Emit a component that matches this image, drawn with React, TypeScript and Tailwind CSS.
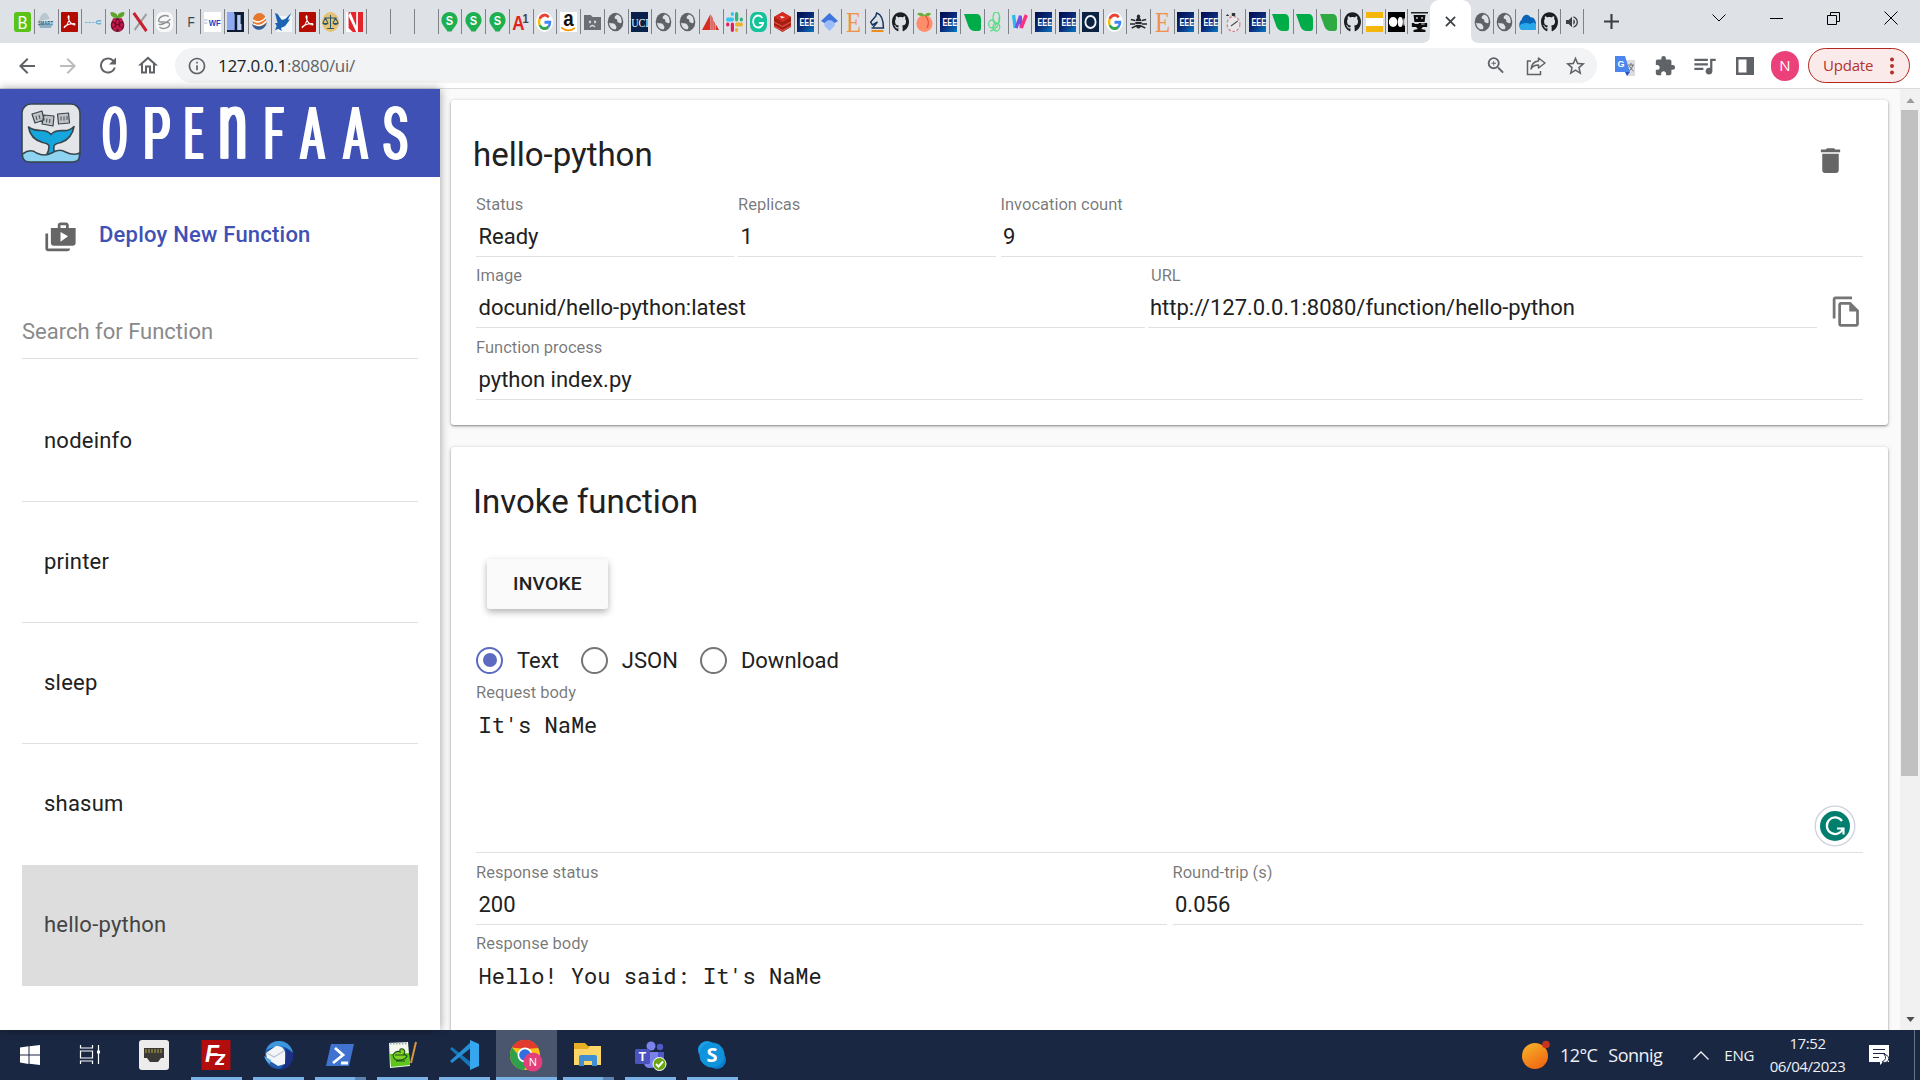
import React from "react";
import { FaGithub } from "react-icons/fa";
import {
  MdPublic, MdShopTwo, MdDelete, MdOutlineFileCopy, MdZoomIn, MdStarBorder, MdExtension,
  MdQueueMusic, MdInfoOutline, MdArrowBack, MdArrowForward, MdRefresh, MdOutlineHome, MdVolumeUp,
} from "react-icons/md";

type Kids = { children?: React.ReactNode };

/* ---------- favicons (20 x 20 grid, squeezed to the narrow tab) ---------- */

function Fav({ children }: Kids) {
  return (
    <svg viewBox="0 0 20 20" preserveAspectRatio="none" className="h-5 w-[17px] overflow-hidden">
      {children}
    </svg>
  );
}

const T = ({ x = 10, y = 15, s = 14, f = "#fff", w = 700, font = "Liberation Sans", children }: any) => (
  <text x={x} y={y} fontSize={s} fill={f} fontWeight={w} textAnchor="middle" fontFamily={font}>
    {children}
  </text>
);

const Acrobat = () => (
  <Fav>
    <rect width="20" height="20" rx="1" fill="#b30b00" />
    <path d="M4 15.500c2.500-1 6-6 5.500-11-.3-1.500-1.800-.5-1 1.500C9.500 9.500 12 12 15.500 13c1.500 0 1.300-1.500-.5-1.500-4 0-7.500 1-10.500 2.800-1 .8-1 1.500-.5 1.200z" fill="none" stroke="#fff" strokeWidth="1.200" strokeLinejoin="round" />
  </Fav>
);
const Pin = () => (
  <Fav>
    <path d="M10 0c6 0 9.500 4 9.500 8.500S14 16 12.500 19.500h-5C6 16 .5 13 .5 8.500S4 0 10 0z" fill="#1eaf50" />
    <T y={13} s={13}>S</T>
  </Fav>
);
const IEEE = () => (
  <Fav>
    <defs>
      <linearGradient id="ieee" x1="0" y1="0" x2="1" y2="1">
        <stop offset="0" stopColor="#020b4c" />
        <stop offset=".5" stopColor="#0a2a78" />
        <stop offset="1" stopColor="#0879c4" />
      </linearGradient>
    </defs>
    <rect width="20" height="20" fill="url(#ieee)" />
    <text x="3" y="14" fontSize="11" fontWeight="700" fill="#fff" fontFamily="Liberation Sans" textLength="17" lengthAdjust="spacingAndGlyphs">EEE</text>
  </Fav>
);
const Google = () => (
  <Fav>
    <circle cx="10" cy="10" r="10" fill="#fff" />
    <g fill="none" strokeWidth="3">
      <path d="M15 5.200A6.500 6.500 0 0 0 4.300 6.900" stroke="#ea4335" />
      <path d="M4.300 6.900a6.500 6.500 0 0 0 0 6.200" stroke="#fbbc05" />
      <path d="M4.300 13.100a6.500 6.500 0 0 0 10.200 1.700" stroke="#34a853" />
      <path d="M14.500 14.800A6.500 6.500 0 0 0 16.500 10.200H10" stroke="#4285f4" />
    </g>
  </Fav>
);
const Globe = () => (
  <Fav>
    <circle cx="10" cy="10" r="9.200" fill="#5f6368" />
    <path d="M2.500 10.500c2 1.500 6 0 7 2s2 1.500 1.500 3.500l-1 1.500C5 17.500 2.500 14 2.500 10.500zM11.500 2.600c-.5 1.500-2.500 1-2.500 3s2.500 1 3 2.500-.5 2 1.500 2.500 2.500 1 3.800-.1C17.500 6 15.500 3.300 11.500 2.600z" fill="#dee1e6" />
  </Fav>
);
const Hub = () => <FaGithub preserveAspectRatio="none" className="h-5 w-[17px] text-[#1b1f23]" />;
const Etsy = () => <Fav><T y={19.500} s={29} f="#f0924a" w={400} font="Liberation Serif">E</T></Fav>;
const Leaf = ({ c = "#00ac47" }: { c?: string }) => (
  <Fav><path d="M0 2h15c3 0 5 2 5 5v9q0 3-3 3h-4Q7 19 5 14z" fill={c} /></Fav>
);

const favicons: React.ReactNode[] = [
  <Fav><rect width="20" height="20" rx="3" fill="#5bc318" /><T y={16.500} s={18} w={400} font="Lato">B</T></Fav>,
  <Fav><path d="M2 9c3-8 7-9 10-7l3 5z" fill="#b9c6cf" /><path d="M1 12h18l-3 4H4z" fill="#8fb0c4" /><T y={13} s={5} f="#255a7c">SMART</T></Fav>,
  <Acrobat />,
  <Fav><path d="M0 10.500h12" stroke="#7db4d6" strokeWidth="1.200" strokeDasharray="3 1" /><path d="M19 9q-5-1-6 1.500 1 2 6 1" fill="none" stroke="#6aaed6" strokeWidth="1.400" /></Fav>,
  <Fav>
    <path d="M10 6C5 6 1 4 2 0c4 0 7 1 8 4 1-3 4-4 8-4 1 4-3 6-8 6z" fill="#5fa52b" />
    <ellipse cx="10" cy="13" rx="8" ry="7" fill="#6d0f2c" />
    {[[6, 8], [14, 8], [10, 10], [5, 13], [15, 13], [10, 15], [7, 17], [13, 17]].map(([x, y]) => <circle key={`${x}${y}`} cx={x} cy={y} r="1.900" fill="#c7184b" />)}
  </Fav>,
  <Fav><path d="M17 2 3 18" stroke="#9a9a9a" strokeWidth="2" /><path d="M2 1l15 18" stroke="#c8202f" strokeWidth="3.500" /></Fav>,
  <Fav><rect width="20" height="20" rx="7" fill="#f8f8f8" /><path d="M15 4.500C10 2 3 5 3 9c0 2 13 0 13 3 0 4-8 6-12 3M3 12c3 2 12-3 14-5" fill="none" stroke="#8f9295" strokeWidth="1.500" /></Fav>,
  <Fav><T x={13} y={15} s={14} f="#37474f" w={400}>F</T></Fav>,
  <Fav><rect width="20" height="20" fill="#fff" /><path d="M0 8h4M0 11h4" stroke="#8b93b8" strokeWidth=".8" /><T x={12.500} y={14} s={9} f="#1f43c4">WF</T></Fav>,
  <Fav><rect width="20" height="20" fill="#b9cdf6" /><path d="M0 0h9v20H0z" fill="#8faaf0" /><path d="M8 0h12v3h-8v17H9V3z" fill="#0e1c33" /><path d="M16 3h4v17h-3v-8h-1z" fill="#0e1c33" /><path d="M0 18h20v2H0z" fill="#0e1c33" /></Fav>,
  <Fav><circle cx="10" cy="9" r="8" fill="#e8772e" /><path d="M2 8q8 5 16-3M3 12q8 4 15-3" fill="none" stroke="#fff" strokeWidth="1.500" /><path d="M1 12c3 8 15 8 18-2-4 5-12 6-18 2z" fill="#2f5e9e" /></Fav>,
  <Fav><path d="M4 4h16v16H2z" fill="#f2f6fb" /><path d="M0 1l3 1 5 6 4-1 7-6-4 7 3-1-6 7-5 2 1 3-4-2-4 1 2-4-2-3 3 0z" fill="#1b63b0" /></Fav>,
  <Acrobat />,
  <Fav><circle cx="10" cy="10" r="10" fill="#e5c274" /><path d="M10 3v13M6 16.500h8M3 6h14M4 6l-3 5M4 6l3 5M16 6l-3 5M16 6l3 5" fill="none" stroke="#27566b" strokeWidth="1.200" /><path d="M0 11h8q-4 4-8 0zM12 11h8q-4 4-8 0z" fill="#27566b" /></Fav>,
  <Fav><rect width="20" height="20" fill="#e3242b" /><path d="M0 0h3v16l5 4H0zM5 0l7 14v6L3 4zM12 0h2v20h-2z" fill="#fff" /></Fav>,
  null, null, null,
  <Pin />, <Pin />, <Pin />,
  <Fav><T x={7.500} y={18} s={20} f="#e2231a">A</T><T x={16} y={11} s={13} f="#444">1</T></Fav>,
  <Google />,
  <Fav><rect width="20" height="20" fill="#fff" /><T y={14} s={22} f="#111">a</T><path d="M1.500 15.500q8 5.500 16 .5" fill="none" stroke="#f79400" strokeWidth="1.700" /></Fav>,
  <Fav><path d="M0 3h8l2 2h10v13H0z" fill="#6b6f73" /><path d="M6 9l2 2M8 9l-2 2M12 9l2 2M14 9l-2 2M7 15q3-3 6 0" fill="none" stroke="#dee1e6" strokeWidth="1.200" /></Fav>,
  <Globe />,
  <Fav><rect width="20" height="20" fill="#06224a" /><T x={10.500} y={15} s={12} w={400} font="Liberation Serif">UCI</T></Fav>,
  <Globe />, <Globe />,
  <Fav><path d="M10 2v16H0zM11 3l1.500 3v12H11zM13.500 8l1.500 3v7h-1.500zM16 12l4 6h-4z" fill="#d92b20" /></Fav>,
  <Fav>
    <g strokeWidth="3.800" strokeLinecap="round" fill="none">
      <path d="M7.500 2v.1M2 7.500h5.500" stroke="#36c5f0" />
      <path d="M12.500 2v5.500M18 7.500h.1" stroke="#2eb67d" />
      <path d="M12.500 18v.1M12.500 12.500H18" stroke="#ecb22e" />
      <path d="M7.500 12.500V18M2 12.500h.1" stroke="#e01e5a" />
    </g>
  </Fav>,
  <Fav><rect width="20" height="20" rx="7" fill="#15c39a" /><path d="M14.500 6A6 6 0 1 0 15.500 11h-5" fill="none" stroke="#fff" strokeWidth="2" /></Fav>,
  <Fav>
    <path d="M0 5l10-5 10 5v10l-10 5-10-5z" fill="#a41e11" />
    <path d="M0 5l10-5 10 5-10 5z" fill="#d82c20" /><path d="M0 10l10 4.500L20 10M0 14l10 4.500L20 14" fill="none" stroke="#de5147" strokeWidth="1.200" /><path d="M7 4l6 1-4 1.500z" fill="#fff" />
  </Fav>,
  <IEEE />,
  <Fav><path d="M10 1l10 8-10 5L0 9z" fill="#3f74dc" /><path d="M4 11q6-6 12 0v3l-6 5-6-5z" fill="#9dbdf8" /></Fav>,
  <Etsy />,
  <Fav><path d="M3 16h14q0-13-8-15l-1 3-6 6 2 3 6-3-5 5" fill="none" stroke="#17365f" strokeWidth="1.700" /><path d="M3 19h14" stroke="#f08c1e" strokeWidth="2" /></Fav>,
  <Hub />,
  <Fav><ellipse cx="10" cy="11.500" rx="9.500" ry="8.500" fill="#ff8d6b" /><path d="M11 4q6 5 2 12" fill="none" stroke="#e0523f" strokeWidth="1.500" /><path d="M1 2q5-3 9 1 4-4 8-1-3 3-8 2-5 1-9-2z" fill="#6fae3d" /></Fav>,
  <IEEE />, <Leaf />,
  <Fav><g fill="none" stroke="#5fdc86" strokeWidth="1.500"><ellipse cx="11" cy="6" rx="4" ry="6" /><ellipse cx="6" cy="12" rx="4" ry="4" /><ellipse cx="11" cy="15" rx="4" ry="4" /><path d="M4 19Q16 16 14 5" /></g></Fav>,
  <Fav><path d="M3 3l2 13" stroke="#2bb8f0" strokeWidth="4" /><path d="M6 16l5-12 1 12" fill="none" stroke="#7a4fe0" strokeWidth="3.500" /><path d="M12 16l6-13" stroke="#ff2f7d" strokeWidth="4" /></Fav>,
  <IEEE />, <IEEE />,
  <Fav><rect width="20" height="20" fill="#0b2340" /><circle cx="10" cy="10" r="6" fill="none" stroke="#f0f4fa" strokeWidth="2.200" /></Fav>,
  <Google />,
  <Fav><ellipse cx="10" cy="11" rx="3.800" ry="5.500" fill="#26282b" /><circle cx="10" cy="4.500" r="2" fill="#26282b" /><path d="M1 7.500l5 1M19 7.500l-5 1M0 12h6M20 12h-6M2 16l5-2M18 16l-5-2" fill="none" stroke="#26282b" strokeWidth="1.400" /><path d="M6 9.500h8M6 12.500h8" stroke="#dee1e6" strokeWidth=".9" /></Fav>,
  <Etsy />, <IEEE />, <IEEE />,
  <Fav><circle cx="10" cy="12" r="7.500" fill="#e8e8ea" stroke="#d08a90" strokeWidth="1.500" strokeDasharray="3 2" /><path d="M7 14l8-5" stroke="#444" strokeWidth="1.200" /><path d="M8 1h4v3H8zM1 4l2-2 2 2z" fill="#333" /></Fav>,
  <IEEE />, <Leaf />, <Leaf />, <Leaf c="#2faa43" />,
  <Hub />,
  <Fav><rect width="20" height="20" fill="#f4b50c" /><rect y="6" width="20" height="8" fill="#fff" /></Fav>,
  <Fav><rect width="20" height="20" fill="#000" /><circle cx="6" cy="10" r="5" fill="#fff" /><ellipse cx="14.500" cy="10" rx="3" ry="5" fill="#fff" /><ellipse cx="19" cy="10" rx=".8" ry="4" fill="#fff" /></Fav>,
  <Fav><rect width="20" height="1.500" fill="#222" /><path d="M3 3h14l-1 7H4zM1 11h18v4h-5l-2 2 5 1v2H3v-2l5-1-2-2H1z" fill="#0c0c0c" /><circle cx="7" cy="6" r="1" fill="#dee1e6" /><circle cx="13" cy="6" r="1" fill="#dee1e6" /><path d="M4 11.500h5M12 12h4" stroke="#dee1e6" /></Fav>,
];

function Divider() {
  return <span className="h-[25px] w-px shrink-0 bg-[#7f8388]" />;
}

function TabStrip() {
  return (
    <div className="flex h-[43px] items-center bg-[#dee1e6] pl-[11px]">
      <div className="flex">
        {favicons.map((icon, i) => (
          <div key={i} className={`flex h-[25px] items-center justify-between pl-[2.500px] ${i > 55 ? "w-[22.350px]" : "w-[23.750px]"}`}>
            <span className="flex w-[17px] justify-center">{icon}</span>
            {i < favicons.length - 1 && <Divider />}
          </div>
        ))}
      </div>
      <div className="relative mt-auto flex h-[43px] w-[41px] items-center justify-center rounded-t-[9px] bg-white">
        <svg viewBox="0 0 12 12" className="h-[11px] w-[11px]"><path d="M1 1l10 10M11 1L1 11" stroke="#3c4043" strokeWidth="1.900" /></svg>
        <svg viewBox="0 0 8 8" className="absolute bottom-0 -left-2 h-2 w-2"><path d="M8 0v8H0q8 0 8-8z" fill="#fff" /></svg>
        <svg viewBox="0 0 8 8" className="absolute -right-2 bottom-0 h-2 w-2"><path d="M0 0v8h8q-8 0-8-8z" fill="#fff" /></svg>
      </div>
      <div className="flex">
        {[
          <Globe />, <Globe />,
          <Fav><path d="M3 18C-1 16 0 9 3 8 5 1 12 2 13 5q6 0 7 6v5q0 2-2 2z" fill="#0a64b8" /><path d="M3 18c-3-2-3-5 0-6q6-2 10 0 5-3 7 0c1 3 0 6-2 6z" fill="#28a8ea" /></Fav>,
          <Hub />,
          <MdVolumeUp className="h-[18px] w-[16px] text-[#3c4043]" />,
        ].map((icon, i) => (
          <div key={i} className="flex h-[25px] w-[22.500px] items-center justify-between pl-[2.500px]">
            <span className="flex w-[17px] justify-center">{icon}</span>
            <Divider />
          </div>
        ))}
      </div>
      <svg viewBox="0 0 14 14" className="ml-[20px] h-[15px] w-[15px]"><path d="M7 0v14M0 7h14" stroke="#3c4043" strokeWidth="2" /></svg>
      <div className="mr-[22px] mb-[7px] ml-auto flex items-center gap-[44px] text-black">
        <svg viewBox="0 0 14 8" className="h-2 w-[14px]" fill="none" stroke="currentColor"><path d="M.5.5L7 7 13.500.5" /></svg>
        <svg viewBox="0 0 13 13" className="h-[13px] w-[13px]" stroke="currentColor"><path d="M0 6.500h13" /></svg>
        <svg viewBox="0 0 13 13" className="h-[13px] w-[13px]" fill="none" stroke="currentColor"><path d="M.5 3.500h9v9h-9zM3.500 3V.5h9v9H10" /></svg>
        <svg viewBox="0 0 14 14" className="h-[14px] w-[14px]" fill="none" stroke="currentColor"><path d="M.5.5l13 13M13.500.5l-13 13" /></svg>
      </div>
    </div>
  );
}

function Toolbar() {
  return (
    <div className="flex h-[46px] items-center border-b border-[#d9dbde] bg-white pl-[15px] font-['Open_Sans',sans-serif] text-[#5f6368]">
      <MdArrowBack className="h-6 w-6" />
      <MdArrowForward className="ml-[17px] h-6 w-6 text-[#babcbe]" />
      <MdRefresh className="ml-[16px] h-[25px] w-6" />
      <MdOutlineHome className="ml-[16px] h-[25px] w-6" />
      <div className="ml-[15px] flex h-[35px] w-[1422px] items-center rounded-full bg-[#f1f3f4] pr-[10px] pl-[12px]">
        <MdInfoOutline className="h-5 w-5" />
        <span className="ml-[11px] text-[17px] leading-none tracking-[-0.300px]"><span className="text-[#202124]">127.0.0.1</span>:8080/ui/</span>
        <MdZoomIn className="ml-auto h-[23px] w-[22px]" />
        <svg viewBox="0 0 20 20" className="ml-[19px] h-5 w-5" fill="none" stroke="currentColor" strokeWidth="1.500">
          <path d="M5 5H1.500v13.500h13V15" /><path d="M12.500 2l6.500 5-6.500 5V9C9 9 6.500 10 5 13c.5-5 3-7.500 7.500-8z" strokeLinejoin="round" />
        </svg>
        <MdStarBorder className="ml-[18px] h-6 w-[23px]" />
      </div>
      <svg viewBox="0 0 20 20" className="ml-[18px] h-5 w-5">
        <path d="M8 4h12v16H12z" fill="#dadce0" /><path d="M0 0h10l5 16H0z" fill="#4a86ee" /><path d="M10 16h5l-3 4z" fill="#2c50c8" />
        <T x={6} y={11} s={9}>G</T>
        <path d="M13 9h6M16 7v2M18 9q-1 4-4 6M14.500 10q1 3 4 5" fill="none" stroke="#70757a" />
      </svg>
      <MdExtension className="ml-[19px] h-[22px] w-[22px]" />
      <MdQueueMusic className="ml-[15px] h-[27px] w-[27px]" />
      <svg viewBox="0 0 18 18" className="ml-[18px] h-[18px] w-[18px]"><path d="M0 0h18v18H0zM2.500 2.500v13h8v-13z" fill="currentColor" fillRule="evenodd" /></svg>
      <div className="ml-[17px] flex h-[30px] w-[28px] items-center justify-center rounded-full bg-[#ec407a] text-[15px] text-white">N</div>
      <div className="ml-[9px] flex h-[35px] w-[102px] items-center justify-between rounded-full border border-[#b3261e] bg-[#fbeaea] pr-[15px] pl-[14px] text-[15px] tracking-[-0.200px] text-[#b3302a]">
        Update
        <svg viewBox="0 0 4 18" className="h-[18px] w-1" fill="currentColor"><circle cx="2" cy="2.500" r="2" /><circle cx="2" cy="9" r="2" /><circle cx="2" cy="15.500" r="2" /></svg>
      </div>
    </div>
  );
}

/* ---------- sidebar ---------- */

function WhaleLogo() {
  return (
    <svg viewBox="0 0 60 60" className="h-[60px] w-[60px]" stroke="#37474f" strokeWidth="1.600" strokeLinejoin="round">
      <rect x="1" y="1" width="58" height="58" rx="9" fill="#e4e5e9" />
      <g fill="#bfc1c4" strokeWidth="1.200">
        <path d="M11 11l10-3 2 9-9 3zM23 12l10 1-1 10-11-2zM36.500 11l11-1 1 10-11 1z" />
        <path d="M15 13l1 4M18 12l1 4M26 15.500l-.5 4M29 16l-.5 4M40 13.500v4M43 13.500v4M46 13v4" strokeWidth=".9" />
      </g>
      <path d="M7.500 24q2 12 14 15.500 6 1 6.500 3.500 0 5-2 8h9q-3-3-2-8 1-2.500 7-3.500 11-4 13-16-5 5-12 4-8 0-11 4-3-4-10-4-8 0-12.500-3.500z" fill="#14a6dc" />
      <path d="M1.500 51q8-6 14-1 8 4 15 0 8-5 14-1 8 4 14 1v3q0 6-7 6H9q-7 0-7.500-6z" fill="#8fd3f2" />
    </svg>
  );
}

/* Condensed lettering: every glyph is narrowed, then thickened sideways. */
const letters = [
  { c: "O", sx: 0.5, sy: 1, box: "w-[25px]" },
  { c: "P", sx: 0.58, sy: 1, box: "ml-[17px] w-[25px]" },
  { c: "E", sx: 0.44, sy: 1, box: "ml-[15px] w-[18px]" },
  { c: "n", sx: 0.72, sy: 1.33, box: "ml-[18px] w-[25px]" },
  { c: "F", sx: 0.47, sy: 1, box: "ml-[20px] w-[18px]" },
  { c: "A", sx: 0.5, sy: 1, box: "ml-[17px] w-[25px]" },
  { c: "A", sx: 0.5, sy: 1, box: "ml-[18px] w-[25px]" },
  { c: "S", sx: 0.56, sy: 1, box: "ml-[15px] w-[25px]" },
];

function Wordmark() {
  return (
    <div className="ml-[21px] flex pt-[3px] text-[72px] leading-none text-white">
      {letters.map(({ c, sx, sy, box }, i) => {
        const d = 1.7 / sx;
        return (
          <span key={i} className={`flex shrink-0 justify-center ${box}`}>
            <span
              className="origin-[50%_60.600px]"
              style={{
                transform: `scale(${sx}, ${sy})`,
                textShadow: [-d, -d / 2, d / 2, d].map((v) => `${v}px 0 0 #fff`).join(", "),
              }}
            >
              {c}
            </span>
          </span>
        );
      })}
    </div>
  );
}

function Sidebar() {
  const items = ["nodeinfo", "printer", "sleep", "shasum", "hello-python"];
  return (
    <aside className="z-10 w-[440px] shrink-0 bg-white shadow-[0_0_9px_rgba(0,0,0,0.38)]">
      <div className="flex h-[88px] items-center bg-[#3f51b5] pl-[21px]">
        <WhaleLogo />
        <Wordmark />
      </div>
      <div className="flex h-[119px] items-center pl-[44px]">
        <MdShopTwo className="mt-px h-[33px] w-[33px] text-[#666]" />
        <span className="mb-[4px] ml-[22px] text-[22px] font-medium tracking-[0.220px] text-[#3f51b5]">Deploy New Function</span>
      </div>
      <div className="mx-[22px] mt-[7px] flex h-[56px] items-center border-b border-black/12 pt-[2px] text-[22px] text-[#8a8a8a]">
        Search for Function
      </div>
      <ul className="mx-[22px] mt-[22px] text-[22px] tracking-[0.220px]">
        {items.map((n) => (
          <li key={n} className={`flex h-[121px] items-center border-b pb-[2px] pl-[22px] ${n === "hello-python" ? "border-transparent bg-[#dddddd] text-[#444]" : n === "shasum" ? "border-transparent" : "border-black/12"}`}>
            {n}
          </li>
        ))}
      </ul>
    </aside>
  );
}

/* ---------- main cards ---------- */

function Field({ label, value, className = "", pad = "pt-[10px]", mono = false, flush = false }: { label: string; value: string; className?: string; pad?: string; mono?: boolean; flush?: boolean }) {
  return (
    <div className={`border-b border-black/12 ${pad} ${className}`}>
      <div className={`h-5 text-[16.500px] leading-5 text-black/54 ${flush ? "pl-[3px]" : ""}`}>{label}</div>
      <div className={`mt-2 h-7 leading-7 ${flush ? "pl-[2px]" : "pl-[2.500px]"} ${mono ? "font-['Roboto_Mono','DejaVu_Sans_Mono',monospace] text-[22px]" : "text-[22px]"}`}>{value}</div>
    </div>
  );
}

function Radio({ label, on = false, className = "" }: { label: string; on?: boolean; className?: string }) {
  return (
    <label className={`flex items-center text-[22px] ${className}`}>
      <span className={`mr-[14px] flex h-[27px] w-[27px] items-center justify-center rounded-full border-2 ${on ? "border-[#5c6bc0]" : "border-[#757575]"}`}>
        {on && <span className="h-[14px] w-[14px] rounded-full bg-[#5c6bc0]" />}
      </span>
      {label}
    </label>
  );
}

function Main() {
  return (
    <main className="flex min-w-0 flex-1 flex-col gap-[22px] overflow-hidden bg-[#fafafa] pt-[11px] pr-[12px] pl-[11px]">
      <section className="h-[325px] shrink-0 rounded-[3px] bg-white pt-[33px] pr-[25px] pl-[25px] shadow-[0_1px_4px_rgba(0,0,0,0.2),0_1px_2px_rgba(0,0,0,0.35)]">
        <div className="-ml-[3px] flex h-[52px] items-start justify-between">
          <h1 className="text-[33px] leading-[44px]">hello-python</h1>
          <MdDelete className="mt-[11px] mr-[16px] h-[33px] w-[33px] text-[#666]" />
        </div>
        <div className="flex gap-[4.500px]">
          <Field label="Status" value="Ready" className="h-[72px] w-[257.500px]" />
          <Field label="Replicas" value="1" className="h-[72px] w-[258px]" />
          <Field label="Invocation count" value="9" className="h-[72px] flex-1" />
        </div>
        <div className="flex">
          <Field label="Image" value="docunid/hello-python:latest" pad="pt-[9px]" className="h-[71px] w-[669px]" />
          <Field label="URL" value="http://127.0.0.1:8080/function/hello-python" pad="pt-[9px]" flush className="ml-[3px] h-[71px] w-[669px]" />
          <MdOutlineFileCopy className="mt-[38px] ml-[13px] h-[33px] w-[33px] text-[#757575]" />
        </div>
        <Field label="Function process" value="python index.py" className="h-[72px]" />
      </section>
      <section className="relative flex-1 rounded-[3px] bg-white pt-[33px] pr-[25px] pl-[25px] shadow-[0_1px_4px_rgba(0,0,0,0.2),0_1px_2px_rgba(0,0,0,0.35)]">
        <h2 className="-ml-[3px] text-[33px] leading-[44px]">Invoke function</h2>
        <button className="mt-[35px] ml-[11px] flex h-[50px] w-[121px] items-center justify-center rounded-[3px] bg-[#fafafa] text-[19.250px] font-medium tracking-[0.190px] shadow-[0_3px_7px_rgba(0,0,0,0.3)]">INVOKE</button>
        <div className="mt-[38px] flex h-[26px] items-center">
          <Radio label="Text" on />
          <Radio label="JSON" className="ml-[22px]" />
          <Radio label="Download" className="ml-[22px]" />
        </div>
        <Field label="Request body" value="It's NaMe" mono className="h-[180px]" />
        <div className="flex gap-[6px]">
          <Field label="Response status" value="200" className="h-[72px] flex-1" />
          <Field label="Round-trip (s)" value="0.056" className="h-[72px] flex-1" />
        </div>
        <Field label="Response body" value="Hello! You said: It's NaMe" mono pad="pt-[9px]" className="h-[120px]" />
        <svg viewBox="0 0 42 42" className="absolute top-[358px] right-[32px] h-[42px] w-[42px]">
          <circle cx="21" cy="21" r="19.800" fill="#fff" stroke="#cdd2dc" strokeWidth="1.300" />
          <circle cx="21" cy="21" r="15" fill="#027e6f" />
          <path d="M28 16a8.300 8.300 0 1 0 1 7.500" fill="none" stroke="#fff" strokeWidth="2.200" />
          <path d="M23 23.500h6.500v6" fill="none" stroke="#fff" strokeWidth="2.200" />
        </svg>
      </section>
    </main>
  );
}

function Scrollbar() {
  return (
    <div className="flex w-[20px] shrink-0 flex-col items-center bg-[#f1f1f1]">
      <svg viewBox="0 0 10 6" className="mt-[9px] h-[5px] w-[9px]"><path d="M5 0l5 6H0z" fill="#9b9b9b" /></svg>
      <div className="mt-[7px] mr-px h-[666px] w-[17px] bg-[#c1c1c1]" />
      <svg viewBox="0 0 10 6" className="mt-auto mb-[8px] h-[5px] w-[9px]"><path d="M5 6l5-6H0z" fill="#505050" /></svg>
    </div>
  );
}

/* ---------- taskbar ---------- */

function App32({ children, run = false, stack = false, active = false }: Kids & { run?: boolean; stack?: boolean; active?: boolean }) {
  return (
    <div className="flex w-[62px] flex-col items-center">
      <div className={`flex h-[47px] w-[61px] items-center justify-center pt-[3px] ${active ? "bg-[#4a556e]" : ""}`}>
        <svg viewBox="0 0 30 30" className="h-[30px] w-[30px] overflow-visible">{children}</svg>
      </div>
      {run && (
        <div className={`flex h-[3px] ${active ? "w-[61px]" : "w-[51px]"}`}>
          <span className="flex-1 bg-[#7ab2e8]" />
          {stack && <span className="w-[11px] bg-[#5b85b0]" />}
        </div>
      )}
    </div>
  );
}

function Taskbar() {
  return (
    <footer className="flex h-[50px] bg-[#1a2742] font-['Open_Sans',sans-serif] text-[#eef1f6]">
      <div className="-ml-px flex">
        <App32><path d="M5 7.500l8.500-1.200v8.300H5zM14.500 6.200L25 5v9.600H14.500zM5 15.500h8.500v8.400L5 22.600zM14.500 15.500H25V25l-10.500-1.300z" fill="#fff" /></App32>
        <App32><path d="M3.500 5v3h12V5M3.500 24v-3h12v3M3.500 11h12v7h-12zM21.500 5v19" fill="none" stroke="#fff" strokeWidth="1.200" /><path d="M20 10.500h3v3h-3z" fill="#fff" /></App32>
        <App32><rect width="30" height="30" rx="3" fill="#ececec" /><path d="M5 8h20v10h-3l-3 4h-8l-3-4H5z" fill="#3b3a36" /><path d="M7 9v4M10 9v4M13 9v4M16 9v4M19 9v4M22 9v4" stroke="#b5a545" /></App32>
        <App32 run>
          <rect x=".5" width="29" height="30" fill="#b30d0d" />
          <text x="4" y="22" fontSize="23" fontWeight="700" fontStyle="italic" fill="#fff" fontFamily="Liberation Sans">F</text>
          <text x="14" y="25" fontSize="21" fontWeight="700" fontStyle="italic" fill="#fff" fontFamily="Liberation Sans">z</text>
        </App32>
        <App32 run>
          <circle cx="16" cy="15" r="14" fill="#1f5db0" /><path d="M3 10C8-3 27-2 30 13 24 5 14 4 3 10z" fill="#3d97dc" /><path d="M30 13q1 15-14 17 10-8 6-22z" fill="#1b2f86" />
          <path d="M3 13l10-7q7-1 9 6v12l-7 2-11-7z" fill="#f3f5f9" /><path d="M4 13l7 4 10-6" fill="none" stroke="#b8c4d8" strokeWidth="1.200" /><path d="M1 16q2 6 6 8l1-4z" fill="#5aa8dc" />
        </App32>
        <App32 run stack><path d="M6 4h23l-5 22H1z" fill="#3f73cf" /><path d="M10 8l8 7-10 8M16 23h7" fill="none" stroke="#fff" strokeWidth="2.800" /></App32>
        <App32 run>
          <path d="M2 3l19-1 2 24-20 2z" fill="#f4f7ee" /><path d="M3 14l19-1 1 12-19 2z" fill="#5fc51a" /><path d="M3 3.500h18" stroke="#9aa" strokeWidth="2" strokeDasharray="1.500 1.500" />
          <path d="M6 15q3-5 7-3-1-4 3-3 3 2 1 5l3 2q-2 4-7 4-6 1-7-5zM8 15h10M9 21h9" fill="#7ed321" stroke="#205020" strokeWidth="1.100" /><path d="M29 2l-5 21" stroke="#d8983a" strokeWidth="2" />
        </App32>
        <App32 run>
          <path d="M1 9l2-2 20 16v6z" fill="#1677b8" /><path d="M1 21l2 2L23 7V1z" fill="#2590d6" /><path d="M21 0l9 4v22l-9 4z" fill="#36a7ee" />
        </App32>
        <App32 run active>
          <circle cx="14" cy="15" r="15" fill="#fbc116" /><path d="M1 7.500A15 15 0 0 1 27.500 8L14 9z" fill="#e23b2e" /><path d="M1 7.500A15 15 0 0 0 13 30l6-11-9-1z" fill="#2da04a" />
          <circle cx="14" cy="15" r="7.500" fill="#fff" /><circle cx="14" cy="15" r="5.800" fill="#2f6fe0" />
          <circle cx="22" cy="22" r="9.500" fill="#e2407a" /><text x="22" y="26" fontSize="11" fill="#fff" textAnchor="middle" fontFamily="Open Sans">N</text>
        </App32>
        <App32 run stack>
          <path d="M1 3h11l3 3h13v19H1z" fill="#e8ae25" /><path d="M1 9h14l2-3h11v19H1z" fill="#fcd768" /><path d="M6 26V17q0-2 2-2h14q2 0 2 2v9h-5v-5h-8v5z" fill="#3f8fd2" />
        </App32>
        <App32 run>
          <circle cx="16" cy="6" r="4.500" fill="#7b83eb" /><circle cx="25" cy="7" r="3.200" fill="#5059c9" />
          <path d="M20 12h9v9q-2 5-9 4z" fill="#5059c9" /><path d="M9 12h14v10q-2 6-8 6t-6-6z" fill="#7b83eb" />
          <rect x="0" y="9" width="15" height="15" rx="1.500" fill="#4b53bc" /><T x={7.500} y={21} s={12}>T</T>
          <circle cx="24.500" cy="24" r="6.500" fill="#6aa512" stroke="#fff" /><path d="M21 24l2.500 2.500 4.500-5" fill="none" stroke="#fff" strokeWidth="1.900" />
        </App32>
        <App32 run>
          <circle cx="10" cy="10" r="9" fill="#1a9fe8" /><circle cx="20" cy="20" r="9" fill="#0a7cd0" /><circle cx="15" cy="15" r="12.500" fill="#0f93dd" />
          <T x={15} y={22} s={20} font="Open Sans">S</T>
        </App32>
      </div>
      <div className="ml-auto flex items-center">
        <svg viewBox="0 0 30 30" className="h-[30px] w-[30px]">
          <defs><linearGradient id="sun" x1="0" y1="0" x2=".6" y2="1"><stop offset="0" stopColor="#f8b62b" /><stop offset="1" stopColor="#f06a12" /></linearGradient></defs>
          <circle cx="14" cy="16" r="13" fill="url(#sun)" /><circle cx="25" cy="4.500" r="3.800" fill="#c8321f" />
        </svg>
        <span className="ml-[9px] text-[18px] tracking-[-0.600px]">12°C</span>
        <span className="ml-[11px] text-[18px] tracking-[-0.500px]">Sonnig</span>
        <svg viewBox="0 0 16 9" className="ml-[31px] h-[9px] w-4" fill="none" stroke="currentColor" strokeWidth="1.300"><path d="M.5 8.500L8 1l7.500 7.500" /></svg>
        <span className="ml-[15px] text-[15px] tracking-[-0.300px]">ENG</span>
        <div className="ml-[15px] flex w-[77px] flex-col items-center text-[15px] leading-[23px] tracking-[-0.400px]">
          <span>17:52</span>
          <span>06/04/2023</span>
        </div>
        <svg viewBox="0 0 20 20" className="ml-[23px] h-5 w-5">
          <path d="M0 0h20v17h-6l-3 3v-3H0z" fill="#fff" /><path d="M4 4.500h12M4 8.500h12M4 12.500h6" stroke="#1a2742" /><path d="M15 9q4 5-2 8 6 2 7-4-1-3-5-4z" fill="#fff" stroke="#1a2742" />
        </svg>
        <span className="ml-[25px] h-full w-px bg-[#6b7487]" />
        <span className="w-[5px]" />
      </div>
    </footer>
  );
}

export default function App() {
  return (
    <div className="flex h-[1080px] w-[1920px] flex-col overflow-hidden bg-white font-['Roboto',sans-serif] text-[#212121]">
      <TabStrip />
      <Toolbar />
      <div className="flex min-h-0 flex-1">
        <Sidebar />
        <Main />
        <Scrollbar />
      </div>
      <Taskbar />
    </div>
  );
}
